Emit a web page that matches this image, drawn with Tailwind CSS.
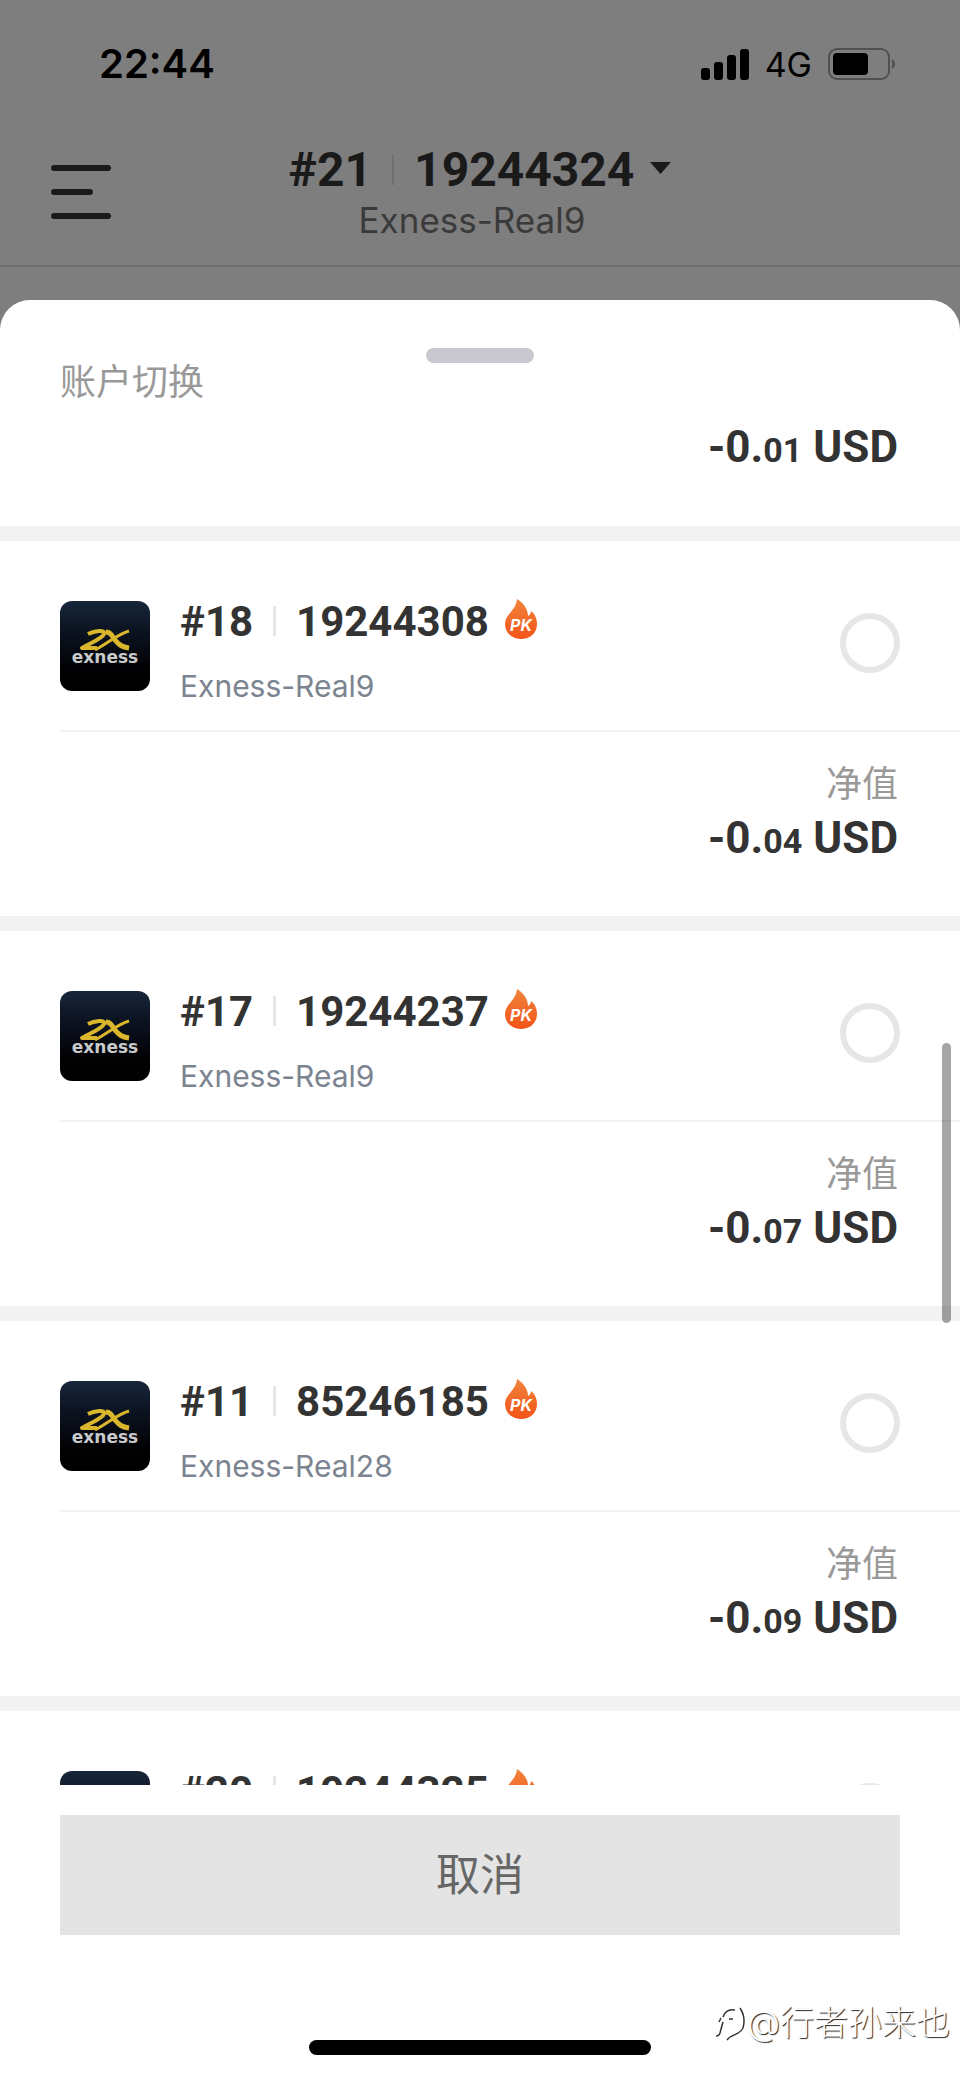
<!DOCTYPE html>
<html lang="zh-CN">
<head>
  <meta charset="UTF-8" />
  <meta name="viewport" content="width=device-width, initial-scale=1.0" />
  <title>账户切换</title>
  <script src="https://cdn.jsdelivr.net/npm/@tailwindcss/browser@4"></script>
</head>
<body class="relative flex h-screen flex-col overflow-hidden bg-[#7e7e7e] font-['Inter','Noto_Sans_CJK_SC',sans-serif] text-[#333333]">

  <!-- shared icons -->
  <svg class="absolute size-0" aria-hidden="true">
    <defs>
      <linearGradient id="logo-bg" x1="0" y1="0" x2="0" y2="1">
        <stop offset="0" stop-color="#18263a" />
        <stop offset="0.35" stop-color="#0b1220" />
        <stop offset="0.75" stop-color="#020204" />
        <stop offset="1" stop-color="#000000" />
      </linearGradient>
      <linearGradient id="fire-bg" x1="0" y1="0" x2="0" y2="1">
        <stop offset="0" stop-color="#f0843c" />
        <stop offset="1" stop-color="#f25518" />
      </linearGradient>
    </defs>
    <symbol id="logo" viewBox="0 0 90 90">
      <rect width="90" height="90" rx="12" fill="url(#logo-bg)" />
      <g fill="none" stroke="#d9b62c" stroke-linejoin="round">
        <path d="M28 33C34 30 46 28 44 33C42 38 30 42 22 47L37 47" stroke-width="4" />
        <path d="M69 30C58 33 48 42 35 49" stroke-width="3" />
        <path d="M46 31C51 31 52 35 55 39C59 44 62 46 69 47" stroke-width="5" />
      </g>
      <text x="45" y="62" text-anchor="middle" font-family="DejaVu Sans" font-weight="bold" font-size="17" fill="#c9cacc">exness</text>
    </symbol>
    <symbol id="fire" viewBox="0 0 32 40">
      <path d="M12 0C17 3 23 9 23 17C25 16 26 14 26 12C30 15 32 20 32 25C32 34 25 40 16 40C7 40 0 34 0 25C0 15 11 12 12 0Z" fill="url(#fire-bg)" />
      <text x="16" y="32" text-anchor="middle" font-family="Inter" font-weight="bold" font-style="italic" font-size="16" fill="#fff">PK</text>
    </symbol>
  </svg>

  <!-- status bar -->
  <div class="flex h-32 shrink-0 items-center justify-between pr-16 pl-[99px] text-black">
    <span class="text-[40px] font-semibold">22:44</span>
    <div class="flex items-center gap-4">
      <svg class="h-[31px] w-12" viewBox="0 0 48 31">
        <rect x="0" y="19" width="9" height="12" rx="3" />
        <rect x="13" y="13" width="9" height="18" rx="3" />
        <rect x="26" y="6" width="9" height="25" rx="3" />
        <rect x="39" y="0" width="9" height="31" rx="3" />
      </svg>
      <span class="text-[34px]">4G</span>
      <svg class="h-8 w-[68px]" viewBox="0 0 68 32">
        <rect x="1" y="1" width="60" height="30" rx="8" fill="none" stroke="#505050" stroke-width="2" />
        <rect x="5" y="5" width="35" height="22" rx="4" />
        <path d="M64 11C68 13 68 19 64 21Z" fill="#505050" />
      </svg>
    </div>
  </div>

  <header class="relative flex h-[139px] shrink-0 flex-col items-center border-b-2 border-[#6f6f6f] pt-[17px] text-[#1a1a1a]">
    <button class="absolute top-[37px] left-[51px]" aria-label="菜单">
      <svg class="h-[54px] w-[60px]" viewBox="0 0 60 54" stroke="#1a1a1a" stroke-width="6" stroke-linecap="round">
        <path d="M3 3H57M3 27H39M3 51H57" />
      </svg>
    </button>
    <button class="flex h-[50px] items-center font-['Roboto'] text-5xl font-bold">
      <span>#21</span>
      <span class="mx-5 h-[30px] w-[2px] bg-[#6f6f6f]"></span>
      <span>19244324</span>
      <svg class="mb-1 ml-4 h-3 w-[21px]" viewBox="0 0 21 12" fill="#1a1a1a"><path d="M0 0H21L10.500 12Z" /></svg>
    </button>
    <p class="h-[50px] pr-4 text-[35px] leading-[50px] text-[#3a3a3a]">Exness-Real9</p>
  </header>
  <div class="h-[33px] shrink-0"></div>

  <!-- bottom sheet -->
  <main class="relative flex min-h-0 flex-1 flex-col rounded-t-[30px] bg-white">
    <div class="relative h-[123px] shrink-0 px-[60px] pt-[58px]">
      <div class="absolute top-12 left-1/2 h-[15px] w-[108px] -translate-x-1/2 rounded-full bg-[#c9c8d0]"></div>
      <h1 class="text-4xl leading-12 text-[#999999]">账户切换</h1>
    </div>

    <ul class="min-h-0 flex-1 overflow-hidden">
      <li class="border-b-[15px] border-[#f2f2f2] pr-[62px] pb-[55px] text-right">
        <p class="font-['Roboto'] text-[44px] leading-12 font-bold">-0.<span class="text-[34px] leading-none">01</span> USD</p>
      </li>

      <li class="border-b-[15px] border-[#f2f2f2]">
        <label class="ml-[60px] flex items-start border-b-2 border-[#f2f2f2] pt-[60px] pr-[60px] pb-6">
          <svg class="size-[90px]"><use href="#logo" /></svg>
          <span class="ml-[30px] flex flex-1 flex-col gap-[25px]">
            <span class="flex h-10 items-center font-['Roboto'] text-[42px] font-bold">
              <span>#18</span>
              <span class="mx-5 h-[30px] w-[3px] bg-[#e6e6e6]"></span>
              <span>19244308</span>
              <svg class="mb-1 ml-4 h-10 w-8"><use href="#fire" /></svg>
            </span>
            <span class="text-[30px] leading-10 text-[#7b8490]">Exness-Real9</span>
          </span>
          <input type="radio" name="account" class="mt-3 size-[60px] appearance-none rounded-full border-6 border-[#e6e6e6]" />
        </label>
        <div class="flex flex-col gap-[6px] pt-7 pr-[62px] pb-[54px] text-right">
          <p class="text-4xl leading-12 text-[#999999]">净值</p>
          <p class="font-['Roboto'] text-[44px] leading-12 font-bold">-0.<span class="text-[34px] leading-none">04</span> USD</p>
        </div>
      </li>

      <li class="border-b-[15px] border-[#f2f2f2]">
        <label class="ml-[60px] flex items-start border-b-2 border-[#f2f2f2] pt-[60px] pr-[60px] pb-6">
          <svg class="size-[90px]"><use href="#logo" /></svg>
          <span class="ml-[30px] flex flex-1 flex-col gap-[25px]">
            <span class="flex h-10 items-center font-['Roboto'] text-[42px] font-bold">
              <span>#17</span>
              <span class="mx-5 h-[30px] w-[3px] bg-[#e6e6e6]"></span>
              <span>19244237</span>
              <svg class="mb-1 ml-4 h-10 w-8"><use href="#fire" /></svg>
            </span>
            <span class="text-[30px] leading-10 text-[#7b8490]">Exness-Real9</span>
          </span>
          <input type="radio" name="account" class="mt-3 size-[60px] appearance-none rounded-full border-6 border-[#e6e6e6]" />
        </label>
        <div class="flex flex-col gap-[6px] pt-7 pr-[62px] pb-[54px] text-right">
          <p class="text-4xl leading-12 text-[#999999]">净值</p>
          <p class="font-['Roboto'] text-[44px] leading-12 font-bold">-0.<span class="text-[34px] leading-none">07</span> USD</p>
        </div>
      </li>

      <li class="border-b-[15px] border-[#f2f2f2]">
        <label class="ml-[60px] flex items-start border-b-2 border-[#f2f2f2] pt-[60px] pr-[60px] pb-6">
          <svg class="size-[90px]"><use href="#logo" /></svg>
          <span class="ml-[30px] flex flex-1 flex-col gap-[25px]">
            <span class="flex h-10 items-center font-['Roboto'] text-[42px] font-bold">
              <span>#11</span>
              <span class="mx-5 h-[30px] w-[3px] bg-[#e6e6e6]"></span>
              <span>85246185</span>
              <svg class="mb-1 ml-4 h-10 w-8"><use href="#fire" /></svg>
            </span>
            <span class="text-[30px] leading-10 text-[#7b8490]">Exness-Real28</span>
          </span>
          <input type="radio" name="account" class="mt-3 size-[60px] appearance-none rounded-full border-6 border-[#e6e6e6]" />
        </label>
        <div class="flex flex-col gap-[6px] pt-7 pr-[62px] pb-[54px] text-right">
          <p class="text-4xl leading-12 text-[#999999]">净值</p>
          <p class="font-['Roboto'] text-[44px] leading-12 font-bold">-0.<span class="text-[34px] leading-none">09</span> USD</p>
        </div>
      </li>

      <li>
        <label class="ml-[60px] flex items-start border-b-2 border-[#f2f2f2] pt-[60px] pr-[60px] pb-6">
          <svg class="size-[90px]"><use href="#logo" /></svg>
          <span class="ml-[30px] flex flex-1 flex-col gap-[25px]">
            <span class="flex h-10 items-center font-['Roboto'] text-[42px] font-bold">
              <span>#20</span>
              <span class="mx-5 h-[30px] w-[3px] bg-[#e6e6e6]"></span>
              <span>19244325</span>
              <svg class="mb-1 ml-4 h-10 w-8"><use href="#fire" /></svg>
            </span>
            <span class="text-[30px] leading-10 text-[#7b8490]">Exness-Real9</span>
          </span>
          <input type="radio" name="account" class="mt-3 size-[60px] appearance-none rounded-full border-6 border-[#e6e6e6]" />
        </label>
      </li>
    </ul>

    <!-- scroll indicator -->
    <div class="absolute top-[743px] right-[9px] h-[280px] w-[9px] rounded-full bg-black/35"></div>

    <div class="shrink-0 px-[60px] pt-[30px] pb-[105px]">
      <button class="h-[120px] w-full bg-[#e4e4e4] text-[44px] text-[#666666]">取消</button>
    </div>
    <div class="mx-auto mb-6 h-[15px] w-[342px] shrink-0 rounded-full bg-black"></div>
  </main>

  <!-- watermark -->
  <div class="absolute right-[10px] bottom-8 flex items-center text-[34px] leading-12 font-light text-white [text-shadow:1px_1px_1px_#222]">
    <svg class="h-9 w-8" viewBox="0 0 32 36" fill="none" stroke="#333" stroke-width="1.500">
      <path d="M1 31C5 31 5 28 6 24L8 17M4 17L6 13M8 12C10 6 14 4 20 5M14 14L18 14M25 3C29 9 30 16 28 23C24 31 17 28 12 35" />
    </svg>
    <span>@行者孙来也</span>
  </div>
</body>
</html>
